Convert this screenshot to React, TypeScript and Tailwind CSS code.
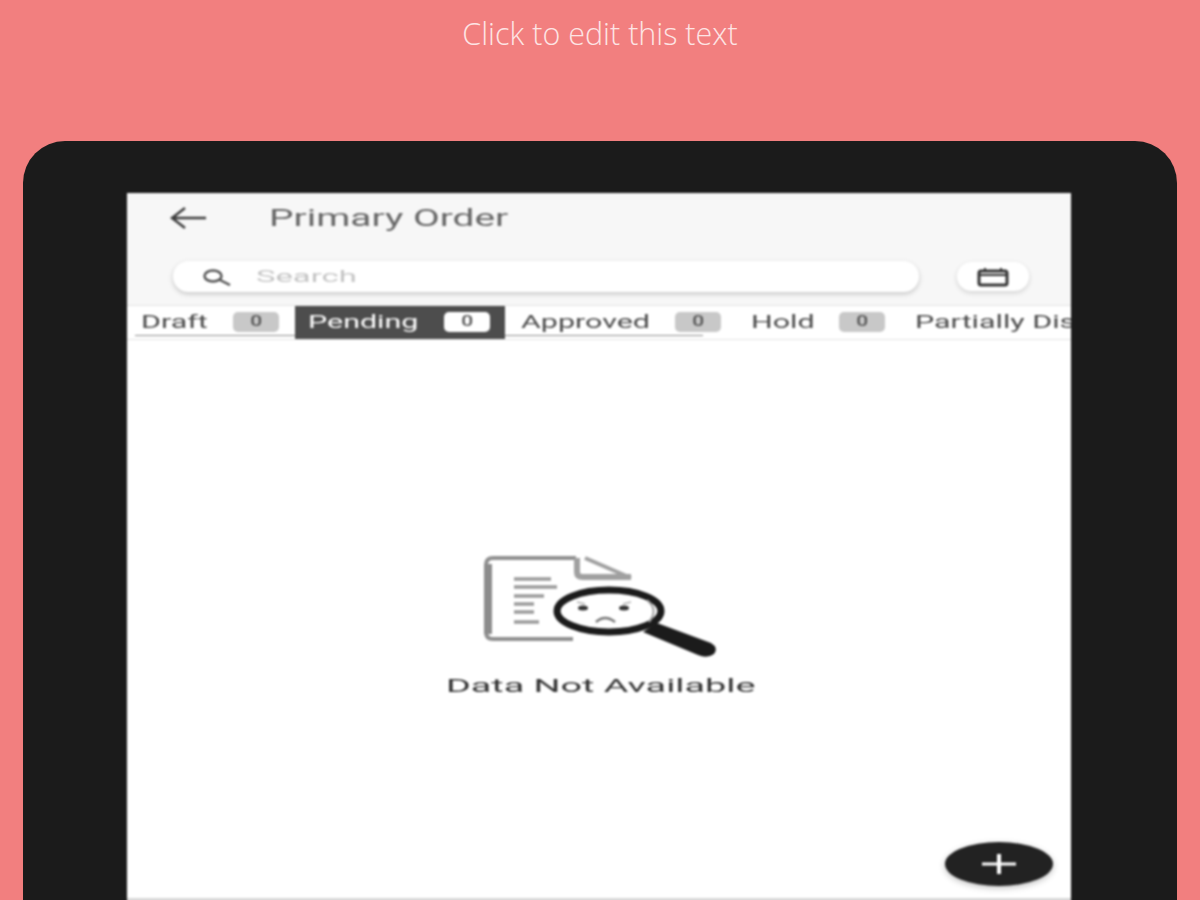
import React from 'react';

const tabs = [
  { label: 'Draft', width: 'w-[92px]', box: 'pl-[6px] w-[160px]', line: 'w-[160px]', active: false },
  { label: 'Pending', width: 'w-[136px]', box: 'pl-[13px] w-[210px]', line: '', active: true },
  { label: 'Approved', width: 'w-[154px]', box: 'pl-[16px] w-[246px]', line: 'w-[198px]', active: false },
  { label: 'Hold', width: 'w-[88px]', box: 'w-[164px]', line: '', active: false },
];

const NoDataIcon = () => (
  <svg width="240" height="110" viewBox="0 0 240 110" fill="none">
    {/* sheet */}
    <path d="M97 8H14Q7 8 7 15V82Q7 89 14 89H94" stroke="#909090" strokeWidth="4" />
    <path d="M9 14V84" stroke="#8c8c8c" strokeWidth="8" />
    <path d="M106 8L152 28" stroke="#a0a0a0" strokeWidth="4" />
    <path d="M98 8V22Q98 27 104 27H152" stroke="#a0a0a0" strokeWidth="6" />
    <path d="M35 29H72M35 37H78M35 46H65M35 54H55M35 62H55M35 72H60" stroke="#9a9a9a" strokeWidth="3.5" />
    {/* magnifier */}
    <path d="M164 82L178 73L232 93Q240 98 235 104Q228 109 219 105Z" fill="#1b1b1b" />
    <ellipse cx="130" cy="61" rx="52" ry="21" fill="#fff" stroke="#1b1b1b" strokeWidth="7" />
    <path d="M168 50Q180 60 170 72" stroke="#a0a0a0" strokeWidth="2" />
    <ellipse cx="104" cy="58" rx="5" ry="2.5" fill="#333" />
    <ellipse cx="145" cy="58" rx="5" ry="2.5" fill="#333" />
    <path d="M98 52L106 54M152 52L144 54" stroke="#b0b0b0" strokeWidth="1.5" />
    <path d="M117 72Q126 64 136 72" stroke="#777" strokeWidth="2.5" />
  </svg>
);

export default function App() {
  return (
    <div className="h-[900px] w-[1200px] overflow-hidden bg-[#f27f7f] font-['Roboto',sans-serif]">
      <div className="flex h-[141px] justify-center pt-[13px]">
        <span className="font-['Open_Sans',sans-serif] text-[30.5px] font-light leading-[40px] text-[#fde4e4]">Click to edit this text</span>
      </div>

      {/* device */}
      <div className="mx-[23px] h-[770px] rounded-t-[42px] bg-[#1b1b1b] pl-[104px] pr-[106px] pt-[52px]">
        <div className="relative flex h-[718px] flex-col overflow-hidden bg-[#d8d8d8] pb-[13px] [filter:blur(0.8px)]">
          <div className="h-[112px] shrink-0 bg-[#f7f7f7]">
            <div className="flex h-[50px] items-center pl-[43px]">
              <svg width="37" height="24" viewBox="0 0 37 24" fill="none" stroke="#3d3d3d" strokeWidth="2.5">
                <path d="M36 12H2M15 2L2 12L15 22" />
              </svg>
              <span className="ml-[62px] origin-left scale-x-[1.62] text-[24px] text-[#666]">Primary Order</span>
            </div>
            <div className="mt-[18px] flex items-center pl-[46px]">
              <div className="flex h-[31px] w-[746px] items-center rounded-full bg-white pl-[28px] shadow-[0_2px_5px_rgba(0,0,0,0.2)]">
                <svg width="32" height="18" viewBox="0 0 32 18" fill="none" stroke="#555" strokeWidth="2.5">
                  <ellipse cx="12" cy="8" rx="8.5" ry="5.5" />
                  <path d="M19 12L29 17" />
                </svg>
                <span className="ml-[23px] origin-left scale-x-[2.05] text-[16px] text-[#c4c4c4]">Search</span>
              </div>
              <div className="ml-[38px] flex h-[29px] w-[72px] items-center justify-center rounded-full bg-white shadow-[0_2px_5px_rgba(0,0,0,0.15)]">
                <svg width="32" height="20" viewBox="0 0 32 20" fill="none" stroke="#333">
                  <rect x="2" y="4" width="28" height="14" rx="2" strokeWidth="3" />
                  <path d="M2 8H30" strokeWidth="2" />
                  <path d="M8 1V5M24 1V5" strokeWidth="2" />
                </svg>
              </div>
            </div>
          </div>

          <div className="flex h-[35px] shrink-0 overflow-hidden border-y border-[#e4e4e4] bg-white pl-[8px]">
            {tabs.map(t => (
              <div key={t.label} className={`relative flex shrink-0 items-center pb-[2px] ${t.box} ${t.active ? 'bg-[#4d4d4d] text-white' : 'text-[#4a4a4a]'}`}>
                <span className={`shrink-0 ${t.width}`}>
                  <span className="inline-block origin-left translate-y-[1px] scale-x-[1.69] text-[18px] leading-[20px]">{t.label}</span>
                </span>
                <span className={`z-10 flex h-[20px] w-[46px] shrink-0 items-center justify-center rounded-[5px] text-[15px] font-medium text-[#555] ${t.active ? 'bg-white' : 'bg-[#c8c8c8]'}`}>
                  <span className="scale-x-[1.4]">0</span>
                </span>
                {t.line && <div className={`absolute bottom-[3px] left-0 h-[1.5px] bg-[#8c8c8c] ${t.line}`} />}
              </div>
            ))}
            <span className="inline-block shrink-0 origin-left translate-y-[6px] scale-x-[1.69] whitespace-nowrap text-[18px] leading-[20px] text-[#4a4a4a]">Partially Dispatched</span>
          </div>

          <div className="flex flex-1 flex-col items-center bg-white pt-[210px]">
            <NoDataIcon />
            <span className="mt-[14px] inline-block translate-x-[2px] scale-x-[2.1] text-[18px] leading-[24px] text-[#333]">Data Not Available</span>
          </div>

          <div className="absolute bottom-[25px] right-[18px] flex h-[44px] w-[108px] items-center justify-center rounded-[50%] bg-[#222] shadow-[0_2px_6px_rgba(0,0,0,0.25)]">
            <svg width="36" height="22" viewBox="0 0 36 22" fill="none" stroke="#fff">
              <path d="M1 11H35" strokeWidth="3" />
              <path d="M18 1V21" strokeWidth="4" />
            </svg>
          </div>
        </div>
      </div>
    </div>
  );
}
